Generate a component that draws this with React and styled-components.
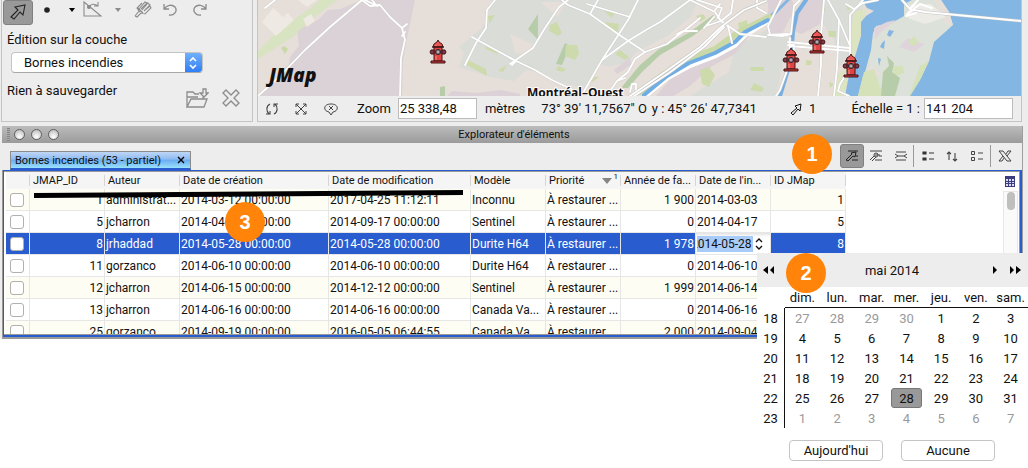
import { useState } from "react";

import styled, { createGlobalStyle, css } from "styled-components";

const GlobalStyle = createGlobalStyle`
  * {
    box-sizing: border-box;
  }
  body {
    background: #fff;
    color: #111;
    font-family: Roboto, "Liberation Sans", sans-serif;
    font-size: 13px;
    margin: 0;
  }
  button, input, select {
    font: inherit;
    color: inherit;
  }
`;

const Flex_Row = css`
  display: flex;
  align-items: center;
`;

const Page = styled.div`
  min-height: 100vh;
`;

const Workspace = styled.div`
  background: #ededed;
  padding: 0 6px 0 1px;
`;

const TopRow = styled.div`
  display: flex;
  align-items: stretch;
  gap: 4px;
  padding-bottom: 4px;
`;

const EditPanel = styled.section`
  width: 252px;
  flex: none;
  border: 1px solid #c4c4c4;
  border-top: 0;
  padding: 0 5px;
`;

const EditTools = styled.div`
  ${Flex_Row};
  height: 25px;
  align-items: flex-start;
  margin-left: -4px;
`;

const ToolButton = styled.button`
  all: unset;
  display: flex;
  align-items: center;
  justify-content: center;
  width: ${(props) => props.$w || 32}px;
  height: ${(props) => props.$h || 20}px;
  flex: none;
  cursor: pointer;
  color: ${(props) => props.$color || "#8c8c8c"};
  ${(props) =>
    props.$active &&
    css`
      background: #999;
      color: #222;
      border: 1px solid #808080;
      border-radius: 3px;
      box-sizing: border-box;
    `}
`;

const LayerLabel = styled.label`
  display: block;
  line-height: 16px;
  margin-top: 7px;
`;

const SelectBox = styled.div`
  position: relative;
  width: 192px;
  height: 21px;
  margin: 4px 0 0 4px;
  border: 1px solid #c4c4c4;
  border-bottom-color: #a8a8a8;
  border-radius: 4px;
  background: #fff;
  overflow: hidden;
`;

const LayerSelect = styled.select`
  appearance: none;
  border: 0;
  background: none;
  width: 100%;
  height: 19px;
  padding: 0 22px 0 12px;
`;

const SelectArrows = styled.span`
  position: absolute;
  right: 0;
  top: 0;
  width: 17px;
  height: 20px;
  background: linear-gradient(#71b0fa, #2d7cf7);
  pointer-events: none;
`;

const SaveRow = styled.div`
  display: flex;
  justify-content: space-between;
  line-height: 16px;
  margin-top: 10px;
`;

const SaveButtons = styled.div`
  ${Flex_Row};
  gap: 2px;
  margin: 4px 0 7px;
`;

const MapPanel = styled.section`
  flex: 1;
  min-width: 0;
  border: 1px solid #c4c4c4;
  border-top: 0;
`;

const MapArea = styled.div`
  height: 96px;
  svg {
    display: block;
    width: 100%;
    height: 96px;
  }
`;

const StatusBar = styled.div`
  ${Flex_Row};
  height: 25px;
  padding-right: 8px;
  white-space: nowrap;
`;

const StatusIcons = styled.div`
  ${Flex_Row};
  width: 99px;
`;

const StatusField = styled.input`
  width: ${(props) => props.$w}px;
  height: 21px;
  border: 1px solid #bcbcbc;
  background: #fff;
  padding: 0 1px;
  margin: 0 ${(props) => props.$after || 0}px 0 ${(props) => props.$before}px;
`;

const Coordinates = styled.span`
  margin-left: 16px;
  display: flex;
  gap: 5px;
`;

const SelectedCount = styled.span`
  ${Flex_Row};
  gap: 6px;
  margin-left: auto;
  margin-right: 35px;
`;

const Explorer = styled.section`
  position: relative;
  border-right: 1px solid #9d9d9d;
  margin-left: 1px;
  margin-right: -1px;
`;

const TitleBar = styled.header`
  ${Flex_Row};
  position: relative;
  justify-content: center;
  height: 17px;
  padding-left: 4px;
  font-size: 11px;
  background: linear-gradient(#bcbcbc, #9b9b9b);
`;

const WindowDots = styled.span`
  ${Flex_Row};
  position: absolute;
  left: 5px;
  top: 2px;
  gap: 6px;
`;

const Grip = styled.i`
  width: 3px;
  height: 13px;
  margin-right: -2px;
  background: repeating-linear-gradient(#858585 0 1px, #aaa 1px 2px);
`;

const Dot = styled.i`
  width: 11px;
  height: 11px;
  border-radius: 50%;
  border: 1px solid #606060;
  background: radial-gradient(circle at 50% 75%, #fff, #b5b5b5);
`;

const TabBar = styled.div`
  display: flex;
  align-items: flex-end;
  justify-content: space-between;
  height: 27px;
  padding: 0 3px 0 8px;
`;

const Tab = styled.div`
  ${Flex_Row};
  justify-content: space-between;
  width: 181px;
  height: 19px;
  padding: 0 5px 0 4px;
  font-size: 11px;
  border: 1px solid #8c8c8c;
  border-bottom: 2px solid #285ccf;
  background: linear-gradient(#c0d6f5, #8dbbf1 45%, #69acf0 50%, #9be2fd);
`;

const TableTools = styled.div`
  ${Flex_Row};
  height: 27px;
  padding-bottom: 1px;
`;

const Separator = styled.i`
  width: 1px;
  height: 22px;
  background: #999;
`;

const TableFrame = styled.div`
  border: 1px solid #999;
  border-width: 0 0 2px 1px;
`;

const BlueFrame = styled.div`
  border: 2px solid #285ccf;
  border-width: 1px 2px 2px 1px;
`;

const TableView = styled.div`
  display: flex;
  justify-content: space-between;
  height: 164px;
  overflow: hidden;
  border: 1px solid #999;
  border-width: 1px 1px 1px 0;
  padding: 0 1px 0 2px;
  background: #fff;
`;

const DataTable = styled.table`
  table-layout: fixed;
  width: 840px;
  flex: none;
  align-self: flex-start;
  border-collapse: separate;
  border-spacing: 0;
  font-size: 12px;
`;

const HeaderCell = styled.th`
  height: 17px;
  padding: 0 3px;
  font-size: 11px;
  font-weight: 400;
  line-height: 16px;
  text-align: left;
  white-space: nowrap;
  overflow: hidden;
  background: linear-gradient(90deg, #d4d4d4 0 1px, transparent 1px) no-repeat right 3px / 1px 11px #f5f5f5;
`;

const PriorityHead = styled.span`
  ${Flex_Row};
  justify-content: space-between;
  sup {
    font-size: 8px;
    line-height: 8px;
  }
`;

const Row = styled.tr`
  background: ${(props) => (props.$odd ? "#fdfdf3" : "#fff")};
  ${(props) =>
    props.$selected &&
    css`
      background: #285ccf;
      color: #fff;
    `}
`;

const Cell = styled.td`
  height: 22px;
  padding: 1px 1px 0;
  line-height: 20px;
  text-align: ${(props) => (props.$right ? "right" : "left")};
  white-space: nowrap;
  overflow: hidden;
  text-overflow: ellipsis;
  border-right: 1px solid #e6e6e6;
  border-bottom: 1px solid #e6e6e6;
`;

const CheckCell = styled(Cell)`
  padding: 0 4px;
`;

const EditorCell = styled(Cell)`
  padding: 0;
`;

const RowCheck = styled.input`
  appearance: none;
  display: block;
  width: 14px;
  height: 14px;
  margin: 0;
  border: 1px solid #b0b0b0;
  border-radius: 3px;
  background: #fff;
`;

const DateEditor = styled.div`
  ${Flex_Row};
  height: 21px;
  padding: 1px 1px 0;
  color: #111;
  background: linear-gradient(#e2e2e2, #fff 4px);
`;

const DateInput = styled.input`
  width: 56px;
  height: 16px;
  border: 0;
  padding: 0;
  text-indent: -6px;
  background: #a9cbf8;
`;

const TableSide = styled.div`
  display: flex;
  flex-direction: column;
  align-items: center;
  width: 15px;
  padding-top: 4px;
  gap: 4px;
`;

const ScrollTrack = styled.div`
  flex: 1;
  width: 15px;
  border: 1px solid #e8e8e8;
  background: #fafafa;
  padding-left: 3px;
`;

const ScrollThumb = styled.div`
  width: 8px;
  height: 18px;
  border-radius: 4px;
  background: #bfbfbf;
`;

const Badge = styled.span`
  position: absolute;
  left: ${(props) => props.$left}px;
  top: ${(props) => props.$top}px;
  display: flex;
  align-items: center;
  justify-content: center;
  width: 40px;
  height: 40px;
  border-radius: 50%;
  background: #ff8409;
  color: #fff;
  font: bold 20px "Liberation Sans", Arial, sans-serif;
`;

const Marker = styled.svg`
  position: absolute;
  left: 32px;
  top: 64px;
`;

const CalendarPopup = styled.div`
  position: absolute;
  top: 127px;
  right: -6px;
  width: 271px;
  background: #fff;
`;

const CalendarHead = styled.div`
  ${Flex_Row};
  justify-content: space-between;
  height: 34px;
  padding: 0 7px 0 6px;
  background: #ededed;
`;

const NavGroup = styled.div`
  ${Flex_Row};
  gap: 12px;
`;

const CalendarTable = styled.table`
  table-layout: fixed;
  width: 100%;
  border-collapse: separate;
  border-spacing: 0;
  margin-bottom: 12px;
`;

const WeekdayCell = styled.th`
  height: 21px;
  padding: 0;
  font-weight: 400;
  line-height: 19px;
  border-bottom: 1px solid #111;
`;

const CornerCell = styled.td`
  padding: 0;
`;

const WeekCell = styled.th`
  height: 20px;
  padding: 0;
  font-weight: 400;
  border-right: 1px solid #111;
`;

const DayCell = styled.td`
  height: 20px;
  padding: 0 2px;
`;

const DayButton = styled.button`
  display: block;
  width: 100%;
  height: 20px;
  padding: 0;
  border: 1px solid transparent;
  border-radius: 3px;
  background: none;
  color: ${(props) => (props.$muted ? "#999" : "#111")};
  ${(props) =>
    props.$selected &&
    css`
      background: #999;
      border-color: #777;
    `}
`;

const CalendarActions = styled.div`
  display: flex;
  gap: 18px;
  padding: 0 33px 6px 32px;
`;

const ActionButton = styled.button`
  flex: 1;
  height: 21px;
  padding: 0;
  border: 1px solid #c4c4c4;
  border-radius: 4px;
  background: #fff;
`;

const Icon = ({ w = 20, h = 20, sw = 1.1, children }) => (
  <svg
    width={w}
    height={h}
    viewBox={`0 0 ${w} ${h}`}
    fill="none"
    stroke="currentColor"
    strokeWidth={sw}
    aria-hidden="true"
  >
    {children}
  </svg>
);

const TableIcon = () => (
  <svg width="11" height="11" viewBox="0 0 11 11" aria-hidden="true">
    <path fill="#3b3b82" d="M0 0h10v11H0z" />
    <path
      fill="#dcdcf5"
      d="M1 3h2v2H1zM4 3h2v2H4zM7 3h2v2H7zM1 6h2v1H1zM4 6h2v1H4zM7 6h2v1H7zM1 8h2v2H1zM4 8h2v2H4zM7 8h2v2H7z"
    />
  </svg>
);

const Hydrant = ({ x, y }) => (
  <g transform={`translate(${x} ${y})`} stroke="#451719" strokeWidth="1">
    <path d="M7 2 L8 0 L9 2 L12 4 L13 7 H3 L4 4 Z" fill="#ea5550" />
    <path d="M4 7 H12 V21 H4 Z" fill="#df4543" />
    <path d="M1 10 H4 V14 H1 L0 12 Z M12 10 H15 L16 12 L15 14 H12 Z" fill="#7a3b46" />
    <path d="M1 21 H15 V23 H1 Z" fill="#c83637" />
    <path d="M2 7 H14" strokeWidth="1.4" />
    <circle cx="8" cy="12" r="2.6" fill="#867079" stroke="#30272e" />
    <circle cx="8" cy="12" r="0.8" fill="#eee" stroke="none" />
    <path d="M6 16 V20 M6 5 V6" stroke="#f58d82" />
  </g>
);

const roads = [
  "M258 96 L278 78 L305 50 L330 27 L362 0",
  "M362 0 L370 6 L380 5 L390 17 L402 28 L405 40 L401 58 L400 96",
  "M365 0 L377 6 L372 0 M402 28 L407 24 M402 36 L405 32",
  "M265 8 L275 0 M495 0 L487 10 L486 28 L476 43 L465 65 M472 37 L516 61 M516 61 L512 65",
  "M510 64 L533 48 L545 28 L559 7 L568 0",
  "M562 0 L568 5 L590 14 L618 34 L645 52 M590 14 L598 0",
  "M587 4 L630 17 M638 0 L628 20 L602 60 L583 93",
  "M510 58 L535 70 L552 80 L582 94",
  "M602 60 L628 41 L646 30 L660 22 L690 0",
  "M645 52 L635 59 L628 72 L617 81 L610 91 M617 81 L625 78",
  "M645 52 L667 44 L677 36 L684 31 L700 18 M677 34 L683 31 L697 31",
  "M690 0 L715 12 L721 21 L740 34 L766 37",
  "M697 0 L722 8 L718 18 M733 0 L731 13 L721 21 L706 26 M704 28 L714 17",
  "M715 10 L720 4 M757 0 L757 8 L766 13 M728 26 L732 43",
  "M630 92 L632 84 L636 84 L636 90",
  "M781 0 L768 26 L770 35 L782 36 L791 34 L794 6 L800 0",
  "M768 35 L788 34 M790 38 L789 65 L780 90 L776 96",
  "M788 42 L850 48 M790 46 L850 51 M788 45 L794 45 L794 49",
  "M824 0 L821 35 L821 65 L818 96 M839 20 L837 68 L834 96",
  "M828 0 L839 20 L850 46 M849 96 L838 91 L840 84 L850 68 L850 15 L863 0",
  "M846 4 L854 9 L863 3 L878 0",
];

const MapDrawing = () => (
  <svg viewBox="258 0 763 96" preserveAspectRatio="xMidYMid slice" role="img" aria-label="Carte">
    <path fill="#e6ded8" d="M258 0H1021V96H258Z" />
    <path
      fill="#dbd2d7"
      d="M362 0 H415 L408 33 L403 60 L402 96 H258 L275 83 L288 70 L290 57 L299 46 L297 30 L318 20 L328 10 L340 9 Z"
    />
    <path fill="#d8e3c1" d="M258 51 L280 29 L312 7 L320 0 H337 L309 21 L294 36 L258 59 Z" />
    <path fill="#eee9e2" d="M262 22 L273 8 L283 17 L288 13 L294 20 L276 36 Z M298 0 L317 0 L307 7 Z M303 19 L311 14 L315 21 L307 27 Z" />
    <path fill="#c9d9a6" d="M281 48 L284 46 L288 49 L285 54 Z" />
    <path
      fill="#dadcd8"
      d="M492 0 H698 L690 17 L670 34 L635 53 L622 72 L600 64 L585 88 L560 82 L540 72 L526 70 L514 81 L491 77 L459 67 L464 53 L459 47 L471 37 L482 28 L489 13 Z"
    />
    <path fill="#e6ded8" d="M510 34 L535 45 L525 55 L515 53 Z M540 2 H566 L558 17 Z M596 69 L626 63 L618 78 L602 80 Z" />
    <path fill="#dadcd8" d="M690 96 L729 72 L735 47 L768 29 L788 39 L776 96 Z" />
    <path
      fill="#dbd1d6"
      d="M656 96 L674 75 L710 56 L735 43 L753 31 L735 54 L712 66 L690 86 L673 96 Z M614 70 L629 58 L632 64 L617 74 Z M768 0 H792 L795 8 L782 34 H768 Z M804 0 H824 L820 24 L802 34 L793 31 Z"
    />
    <path fill="#dbd1d6" d="M452 91 L477 93 L500 90 L520 94 V96 H447 Z" />
    <path fill="#b7cda9" d="M440 87 L445 86 V96 H440 Z M528 29 L538 14 L538 40 Z M565 43 L570 46 L562 65 L556 64 Z" />
    <path
      fill="#b7cda9"
      d="M621 88 L640 65 L659 49 L690 32 L713 15 L716 18 L693 36 L660 55 L642 72 L628 88 Z"
    />
    <path
      fill="#cddaab"
      d="M488 16 L495 15 L489 24 Z M468 60 L486 69 L487 76 L467 65 Z M500 69 L507 65 L503 72 L498 71 Z M485 46 L499 52 L497 54 L486 49 Z M566 45 L577 45 L579 54 L575 60 L565 56 Z M558 66 L566 69 L563 72 L556 70 Z M550 25 L557 22 L562 33 L558 36 L549 31 Z M605 22 L619 24 L618 32 L609 30 Z M615 54 L620 50 L629 57 L625 60 Z M696 16 L703 14 L706 18 L700 22 Z M604 11 L614 13 L612 18 Z M700 70 L709 67 L715 75 L709 87 L702 84 Z M750 67 H764 V71 H751 Z M754 83 L764 88 L762 92 L750 90 Z M738 23 L747 20 L748 29 L740 33 Z M594 77 L599 77 L591 83 Z"
    />
    <path fill="#dadcd8" d="M824 0 H864 L854 50 L839 67 L834 40 L822 22 Z" />
    <path fill="#dce4c2" d="M853 12 L866 9 L861 34 L855 54 L849 72 L845 96 H832 L837 75 L850 64 Z" />
    <path fill="#cddaab" d="M828 31 L836 31 V37 H829 Z M806 60 L812 61 L811 65 L806 65 Z M829 82 L834 84 L830 88 Z M846 5 L851 7 L848 11 Z M820 7 L825 7 V12 Z" />
    <path fill="#84b6e3" d="M1021 0 H862 L867 8 L874 11 L866 16 L861 22 V36 L856 53 L849 75 L845 96 H1021 Z" />
    <path
      fill="#dce2d9"
      d="M912 0 L904 4 L904 16 L892 23 L876 26 L873 33 L871 50 L864 76 L858 96 H910 L921 78 L929 61 L934 42 L953 25 L949 12 L941 0 Z"
    />
    <path fill="#e6ded8" d="M863 76 L871 64 L881 74 L872 80 L873 96 H858 Z M934 0 H941 L949 12 L953 25 L945 24 Z" />
    <path fill="#dfd4dc" d="M874 28 L887 22 L896 20 L881 32 L875 39 Z M899 47 L908 38 L925 44 L914 52 Z" />
    <path fill="#ecebe6" d="M908 5 L931 4 L946 17 L925 24 L908 18 Z" />
    <path fill="#d5e1b8" d="M864 72 L874 69 L880 87 L886 96 H858 Z M908 42 L914 36 L919 43 L912 46 Z M891 66 L903 66 L904 73 L895 76 Z M920 66 L929 61 L920 80 L910 96 H909 Z" />
    <path fill="#b7cda9" d="M887 56 L894 63 L892 72 L900 78 L895 96 H881 L883 72 L889 66 Z" />
    <path fill="#84b6e3" d="M889 30 L894 31 L890 37 L887 35 Z M882 43 L885 40 L884 49 L880 47 Z M878 58 L881 59 L879 66 Z M768 16 L778 8 L786 0 H790 L775 15 L768 20 Z" />
    <g fill="none" strokeLinecap="round" strokeLinejoin="round">
      <path d="M640 92 L664 74 L689 59 L715 49 L739 32 L769 17" stroke="#c9d9a6" strokeWidth="6" />
      <path d="M644 97 L667 78 L689 66 L715 56 L735 45 L745 35 L768 21" stroke="#fff" strokeWidth="5" />
      <path d="M644 95 L667 76 L689 63 L715 53 L735 42 L745 32 L768 20" stroke="#70ade4" strokeWidth="4" />
      <path d="M806 0 L797 13 L793 31 L791 60 L780 96" stroke="#78afe2" strokeWidth="4" />
      {roads.map((d) => (
        <path key={d} d={d} stroke="#cbcbc9" strokeWidth="2.6" />
      ))}
      {roads.map((d) => (
        <path key={d} d={d} stroke="#fff" strokeWidth="1.8" />
      ))}
      <path
        d="M630 96 L665 72 L700 47 L721 27 L744 10 L766 1 M634 96 L669 73 L704 47 L724 27"
        stroke="#c5c5c3"
        strokeWidth="3"
      />
      <path
        d="M630 96 L665 72 L700 47 L721 27 L744 10 L766 1 M634 96 L669 73 L704 47 L724 27"
        stroke="#fff"
        strokeWidth="1.8"
      />
      <path d="M902 0 L910 9 L925 12 L1021 21" stroke="#c3c5c7" strokeWidth="3" />
      <path
        d="M902 0 L910 9 L925 12 L1021 21 M907 14 L920 4 L932 8 M906 16 L916 13 M918 0 L910 9"
        stroke="#fff"
        strokeWidth="2"
      />
    </g>
    <Hydrant x={430} y={40} />
    <Hydrant x={809} y={30} />
    <Hydrant x={783} y={48} />
    <Hydrant x={843} y={54} />
    <text
      x="527"
      y="97"
      fontFamily="'Noto Sans', sans-serif"
      fontWeight="700"
      fontSize="12"
      fill="#111"
      stroke="#fff"
      strokeWidth="2"
      paintOrder="stroke"
    >
      Montréal–Ouest
    </text>
    <text
      x="269"
      y="82"
      fontFamily="'Open Sans', sans-serif"
      fontWeight="800"
      fontStyle="italic"
      fontSize="19"
      fill="#111"
    >
      JMap
    </text>
  </svg>
);

const columns = [
  { name: "JMAP_ID", width: 75, right: true },
  { name: "Auteur", width: 75 },
  { name: "Date de création", width: 149 },
  { name: "Date de modification", width: 142 },
  { name: "Modèle", width: 75 },
  { name: "Priorité", width: 75 },
  { name: "Année de fa...", width: 75, right: true },
  { name: "Date de l'in...", width: 75 },
  { name: "ID JMap", width: 75, right: true },
];

const rows = [
  ["1", "administrat...", "2014-03-12 00:00:00", "2017-04-25 11:12:11", "Inconnu", "À restaurer ...", "1 900", "2014-03-03", "1"],
  ["5", "jcharron", "2014-04-17 00:00:00", "2014-09-17 00:00:00", "Sentinel", "À restaurer ...", "0", "2014-04-17", "5"],
  ["8", "jrhaddad", "2014-05-28 00:00:00", "2014-05-28 00:00:00", "Durite H64", "À restaurer ...", "1 978", "2014-05-28", "8"],
  ["11", "gorzanco", "2014-06-10 00:00:00", "2014-06-10 00:00:00", "Durite H64", "À restaurer ...", "0", "2014-06-10", ""],
  ["12", "jcharron", "2014-06-15 00:00:00", "2014-12-12 00:00:00", "Sentinel", "À restaurer ...", "1 999", "2014-06-14", ""],
  ["13", "jcharron", "2014-06-16 00:00:00", "2014-06-16 00:00:00", "Canada Va...", "À restaurer ...", "0", "2014-06-16", ""],
  ["25", "gorzanco", "2014-09-19 00:00:00", "2016-05-05 06:44:55", "Canada Va...", "À restaurer ...", "2 000", "2014-09-04", ""],
];

const weekdays = ["dim.", "lun.", "mar.", "mer.", "jeu.", "ven.", "sam."];
const weeks = [18, 19, 20, 21, 22, 23];

// 27 april is the first visible day
const getDay = (week, day) => {
  const n = week * 7 + day - 3;
  if (n < 1) return { label: n + 30, muted: true };
  if (n > 31) return { label: n - 31, muted: true };
  return { label: n, muted: false };
};

const Calendar = ({ selected, onSelect }) => (
  <CalendarPopup>
    <CalendarHead>
      <NavGroup>
        <ToolButton $w={12} $color="#000" aria-label="Année précédente">
          <Icon w={12} h={8}>
            <path d="M5 0 V8 L0 4 Z M11 0 V8 L7 4 Z" fill="currentColor" stroke="none" />
          </Icon>
        </ToolButton>
        <ToolButton $w={5} $color="#000" aria-label="Mois précédent">
          <Icon w={5} h={8}>
            <path d="M4 0 V8 L0 4 Z" fill="currentColor" stroke="none" />
          </Icon>
        </ToolButton>
      </NavGroup>
      <span>mai 2014</span>
      <NavGroup>
        <ToolButton $w={5} $color="#000" aria-label="Mois suivant">
          <Icon w={5} h={8}>
            <path d="M1 0 V8 L5 4 Z" fill="currentColor" stroke="none" />
          </Icon>
        </ToolButton>
        <ToolButton $w={12} $color="#000" aria-label="Année suivante">
          <Icon w={12} h={8}>
            <path d="M1 0 V8 L5 4 Z M7 0 V8 L12 4 Z" fill="currentColor" stroke="none" />
          </Icon>
        </ToolButton>
      </NavGroup>
    </CalendarHead>
    <CalendarTable>
      <colgroup>
        <col style={{ width: 28 }} />
      </colgroup>
      <thead>
        <tr>
          <CornerCell />
          {weekdays.map((day) => (
            <WeekdayCell key={day}>{day}</WeekdayCell>
          ))}
        </tr>
      </thead>
      <tbody>
        {weeks.map((week, i) => (
          <tr key={week}>
            <WeekCell>{week}</WeekCell>
            {weekdays.map((name, j) => {
              const { label, muted } = getDay(i, j);
              const isSelected = !muted && label === selected;
              return (
                <DayCell key={name}>
                  <DayButton $muted={muted} $selected={isSelected} onClick={() => onSelect(label)}>
                    {label}
                  </DayButton>
                </DayCell>
              );
            })}
          </tr>
        ))}
      </tbody>
    </CalendarTable>
    <CalendarActions>
      <ActionButton>Aujourd'hui</ActionButton>
      <ActionButton>Aucune</ActionButton>
    </CalendarActions>
  </CalendarPopup>
);

const EditSection = () => (
  <EditPanel>
    <EditTools>
      <ToolButton $active $w={30} $h={25} aria-label="Sélection">
        <Icon>
          <path d="M3 14 L10 7 L7 4 L17 2 L15 12 L12 9 L6 16 Z" />
        </Icon>
      </ToolButton>
      <ToolButton $w={28} $color="#222" aria-label="Point">
        <Icon w={6} h={6}>
          <circle cx="3" cy="3" r="2.8" fill="currentColor" stroke="none" />
        </Icon>
      </ToolButton>
      <ToolButton $w={22} $color="#000" aria-label="Types de géométrie">
        <Icon w={6} h={4}>
          <path d="M0 0 H6 L3 4 Z" fill="currentColor" stroke="none" />
        </Icon>
      </ToolButton>
      <ToolButton $w={20} aria-label="Accrochage">
        <Icon>
          <path d="M1 2 V16 H18 Z M6 7 C8 4 11 3 15 6 M15 2 V6 H11" />
          <circle cx="6" cy="7" r="1.5" fill="currentColor" />
        </Icon>
      </ToolButton>
      <ToolButton $w={30} aria-label="Options d'accrochage">
        <Icon w={6} h={4}>
          <path d="M0 0 H6 L3 4 Z" fill="currentColor" stroke="none" />
        </Icon>
      </ToolButton>
      <ToolButton $w={20} aria-label="Couper">
        <Icon>
          <path d="M2 16 L6 11 L4 8 L9 3 M6 9 L12 2 L14 3 L8 9 M9 10 L15 3 L17 5 L11 11 M12 10 L17 6 L18 8 L12 14 L8 13 L4 17 L2 16 M5 8 L10 13 M6 12 L8 10" />
        </Icon>
      </ToolButton>
      <ToolButton $w={33} aria-label="Annuler">
        <Icon w={16} h={16} sw={1.3}>
          <path d="M2 2 V7 H7 M2 7 C5 3 10 2 13 5 C16 9 12 14 7 13" />
        </Icon>
      </ToolButton>
      <ToolButton $w={28} aria-label="Rétablir">
        <Icon w={16} h={16} sw={1.3}>
          <path d="M14 2 V7 H9 M14 7 C11 3 6 2 3 5 C0 9 4 14 9 13" />
        </Icon>
      </ToolButton>
    </EditTools>
    <LayerLabel htmlFor="layer">Édition sur la couche</LayerLabel>
    <SelectBox>
      <LayerSelect id="layer">
        <option>Bornes incendies</option>
      </LayerSelect>
      <SelectArrows>
        <svg width="17" height="20" fill="none" stroke="#fff" strokeWidth="1.6">
          <path d="M5 8 L8 5 L11 8 M5 12 L8 15 L11 12" />
        </svg>
      </SelectArrows>
    </SelectBox>
    <SaveRow>
      <span>Rien à sauvegarder</span>
      <SaveButtons>
        <ToolButton $h={22} aria-label="Sauvegarder">
          <Icon w={24} h={22} sw={1.3}>
            <path d="M2 20 V5 H8 L10 7 H14 M18 10 V12 M2 20 L6 12 H22 L19 20 Z M2 10 H13 M18 2 H21 V6 H23 L19 10 L15 6 H18 Z" />
          </Icon>
        </ToolButton>
        <ToolButton $h={22} aria-label="Abandonner">
          <Icon sw={1.3}>
            <path d="M5 2 L10 7 L15 2 L18 5 L13 10 L18 15 L15 18 L10 13 L5 18 L2 15 L7 10 L2 5 Z" />
          </Icon>
        </ToolButton>
      </SaveButtons>
    </SaveRow>
  </EditPanel>
);

const MapSection = () => (
  <MapPanel>
    <MapArea>
      <MapDrawing />
    </MapArea>
    <StatusBar>
      <StatusIcons>
        <ToolButton $w={28} $color="#444" aria-label="Rafraîchir">
          <Icon w={14} h={14}>
            <path d="M5 2 C1 4 1 9 4 12 M1 12 H5 V9 M9 12 C13 10 13 5 10 2 M13 2 H9 V5" />
          </Icon>
        </ToolButton>
        <ToolButton $w={30} $color="#444" aria-label="Vue globale">
          <Icon w={14} h={14} sw={1}>
            <path d="M2 2 L12 12 M12 2 L2 12 M2 5 V2 H5 M9 2 H12 V5 M12 9 V12 H9 M5 12 H2 V9" />
          </Icon>
        </ToolButton>
        <ToolButton $w={30} $color="#444" aria-label="Effacer">
          <Icon w={14} h={14} sw={1}>
            <path d="M5 10 C-1 9 -1 2 7 2 C15 2 15 9 9 10 L7 13 Z M5 4 L9 8 M9 4 L5 8" />
          </Icon>
        </ToolButton>
      </StatusIcons>
      <label htmlFor="zoom">Zoom</label>
      <StatusField id="zoom" $w={79} $before={7} $after={8} defaultValue="25 338,48" />
      <span>mètres</span>
      <Coordinates>
        <span>73° 39' 11,7567" O</span>
        <span>y : 45° 26' 47,7341</span>
      </Coordinates>
      <SelectedCount>
        <Icon w={14} h={14} sw={1}>
          <path d="M2 11 L8 6 L6 4 L12 2 L11 9 L9 7 L4 13 Z" />
        </Icon>
        1
      </SelectedCount>
      <label htmlFor="scale">Échelle = 1 :</label>
      <StatusField id="scale" $w={89} $before={4} defaultValue="141 204" />
    </StatusBar>
  </MapPanel>
);

const TableToolbar = () => (
  <TableTools>
    <ToolButton $active $w={24} $h={24} aria-label="Sélection des éléments">
      <Icon w={16} h={16} sw={1}>
        <path d="M4 3 H14 M12 8 H14 M8 12 H14 M2 12 L8 6 L7 5 L12 4 L11 9 L9 8 L4 13 Z" />
      </Icon>
    </ToolButton>
    <ToolButton $w={24} $color="#444" aria-label="Centrer">
      <Icon w={16} h={16} sw={1}>
        <path d="M2 3 H14 M11 8 H14 M7 12 H14 M2 12 L6 8 M4 13 L8 9 M7 7 H12" />
        <circle cx="8" cy="7" r="2" />
      </Icon>
    </ToolButton>
    <ToolButton $w={25} $color="#444" aria-label="Ajuster">
      <Icon w={16} h={16} sw={1}>
        <path d="M3 4 H13 M3 12 H13 M2 6 L5 8 L2 10 M14 6 L11 8 L14 10 M5 8 H11" />
      </Icon>
    </ToolButton>
    <Separator />
    <ToolButton $w={27} $color="#333" aria-label="Éléments sélectionnés">
      <Icon w={14} h={12}>
        <path d="M2 2 H5 V4 H2 Z M2 8 H5 V10 H2 Z" fill="currentColor" />
        <path d="M8 3 H13 M8 9 H13" />
      </Icon>
    </ToolButton>
    <ToolButton $w={22} $color="#444" aria-label="Inverser">
      <Icon w={14} h={12}>
        <path d="M4 10 V2 M2 4 L4 2 L6 4 M10 3 V11 M8 9 L10 11 L12 9" />
      </Icon>
    </ToolButton>
    <ToolButton $w={27} $color="#444" aria-label="Désélectionner">
      <Icon w={14} h={12} sw={1}>
        <path d="M1.5 1.5 H4.5 V4.5 H1.5 Z M1.5 7.5 H4.5 V10.5 H1.5 Z M8 3 H13 M8 9 H13" />
      </Icon>
    </ToolButton>
    <Separator />
    <ToolButton $w={28} $color="#444" aria-label="Exporter vers Excel">
      <Icon w={14} h={14} sw={1}>
        <path d="M1 2 H5 L13 12 H9 Z M8 5 L10 2 H13 L9 7 M6 9 L4 12 H1 L5 7" />
      </Icon>
    </ToolButton>
  </TableTools>
);

const App = () => {
  const [selectedDay, setSelectedDay] = useState(28);

  return (
    <Page>
      <GlobalStyle />
      <Workspace>
        <TopRow>
          <EditSection />
          <MapSection />
        </TopRow>
        <Explorer>
          <TitleBar>
            <WindowDots>
              <Grip />
              <Dot />
              <Dot />
              <Dot />
            </WindowDots>
            Explorateur d'éléments
          </TitleBar>
          <TabBar>
            <Tab>
              Bornes incendies (53 - partiel)
              <ToolButton $w={8} $h={10} $color="#000" aria-label="Fermer l'onglet">
                <Icon w={8} h={8} sw={1.4}>
                  <path d="M1 1 L7 7 M7 1 L1 7" />
                </Icon>
              </ToolButton>
            </Tab>
            <TableToolbar />
          </TabBar>
          <TableFrame>
            <BlueFrame>
              <TableView>
                <DataTable>
                  <colgroup>
                    <col style={{ width: 24 }} />
                    {columns.map((c) => (
                      <col key={c.name} style={{ width: c.width }} />
                    ))}
                  </colgroup>
                  <thead>
                    <tr>
                      <HeaderCell />
                      {columns.map((c) => (
                        <HeaderCell key={c.name}>
                          {c.name === "Priorité" ? (
                            <PriorityHead>
                              {c.name}
                              <span>
                                <svg width="10" height="6">
                                  <path d="M0 0 H10 L5 6 Z" fill="#858585" />
                                </svg>
                                <sup> 1</sup>
                              </span>
                            </PriorityHead>
                          ) : (
                            c.name
                          )}
                        </HeaderCell>
                      ))}
                    </tr>
                  </thead>
                  <tbody>
                    {rows.map((row, i) => (
                      <Row key={row[0]} $odd={i % 2 === 0} $selected={i === 2}>
                        <CheckCell>
                          <RowCheck type="checkbox" aria-label={`Élément ${row[0]}`} />
                        </CheckCell>
                        {row.map((value, j) =>
                          i === 2 && j === 7 ? (
                            <EditorCell key={columns[j].name}>
                              <DateEditor>
                                <DateInput
                                  aria-label="Date de l'inspection"
                                  value={`2014-05-${String(selectedDay).padStart(2, "0")}`}
                                  readOnly
                                />
                                <Icon w={12} h={14} sw={1.4}>
                                  <path d="M3 5 L6 2 L9 5 M3 9 L6 12 L9 9" />
                                </Icon>
                              </DateEditor>
                            </EditorCell>
                          ) : (
                            <Cell key={columns[j].name} $right={columns[j].right}>
                              {value}
                            </Cell>
                          )
                        )}
                      </Row>
                    ))}
                  </tbody>
                </DataTable>
                <TableSide>
                  <TableIcon />
                  <ScrollTrack>
                    <ScrollThumb />
                  </ScrollTrack>
                </TableSide>
              </TableView>
            </BlueFrame>
          </TableFrame>
          <Marker width="430" height="9" aria-hidden="true">
            <path d="M0 3 L429 0 V5 L0 8 Z" fill="#000" />
          </Marker>
          <Calendar selected={selectedDay} onSelect={setSelectedDay} />
          <Badge $left={790} $top={8}>1</Badge>
          <Badge $left={784} $top={127}>2</Badge>
          <Badge $left={223} $top={76}>3</Badge>
        </Explorer>
      </Workspace>
    </Page>
  );
};

export default App;
